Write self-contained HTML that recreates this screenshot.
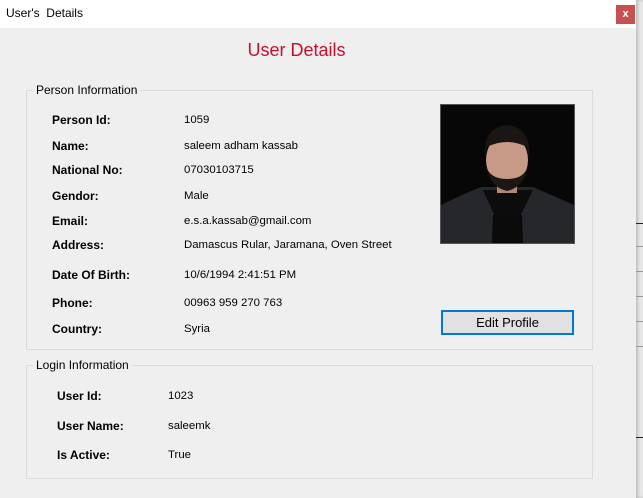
<!DOCTYPE html>
<html><head><style>
body{margin:0;width:643px;height:498px;position:relative;overflow:hidden;background:#f0f0f0;font-family:"Liberation Sans",sans-serif;font-size:12px;color:#000}
.side{position:absolute;left:636px;top:0;width:7px;height:498px;background:#e9e9e9;box-shadow:inset 2px 0 3px #bbb}
.ln{position:absolute;left:636px;width:7px;height:1px;background:#999}
.title{position:absolute;left:0;top:0;width:636px;height:28px;background:#fff}
.title span{position:absolute;left:6px;top:6px;font-size:12px}
.close{position:absolute;left:616px;top:5px;width:19px;height:19px;background:#c75050;color:#fff;font-weight:bold;font-size:11px;text-align:center;line-height:18px}
.dlg{position:absolute;left:0;top:28px;width:636px;height:470px;background:#efefef}
h1{position:absolute;left:0;width:593px;top:40px;margin:0;text-align:center;font-weight:normal;font-size:18px;color:#c8102e}
.gb{position:absolute;border:1px solid #dcdcdc}
.gb .lg{position:absolute;top:-8px;left:6px;background:#efefef;padding:0 3px;font-size:12px}
.t{position:absolute;white-space:nowrap;font-size:11.4px;margin-top:1px}
.b{font-weight:bold;font-size:12px;margin-top:0}
.photo{position:absolute;left:440px;top:104px;width:133px;height:138px;border:1px solid #555;background:#070707;overflow:hidden}
.btn{position:absolute;left:441px;top:310px;width:129px;height:21px;border:2px solid #0078d7;background:#e1e1e1;text-align:center;line-height:21px;font-size:13px}
</style></head><body>
<div class="side"></div>
<div class="ln" style="top:223px;background:#222"></div><div class="ln" style="top:246px"></div><div class="ln" style="top:271px"></div><div class="ln" style="top:296px"></div><div class="ln" style="top:321px"></div><div class="ln" style="top:346px"></div><div class="ln" style="top:437px;background:#222"></div>
<div class="title"><span>User's&nbsp; Details</span><div class="close">x</div></div>
<div class="dlg"></div>
<h1>User Details</h1>
<div class="gb" style="left:26px;top:90px;width:565px;height:258px"><div class="lg">Person Information</div></div>
<div class="gb" style="left:26px;top:365px;width:565px;height:112px"><div class="lg">Login Information</div></div>
<div class="t b" style="left:52px;top:113px">Person Id:</div><div class="t" style="left:184px;top:113px">1059</div>
<div class="t b" style="left:52px;top:139px">Name:</div><div class="t" style="left:184px;top:139px">saleem adham kassab</div>
<div class="t b" style="left:52px;top:163px">National No:</div><div class="t" style="left:184px;top:163px">07030103715</div>
<div class="t b" style="left:52px;top:189px">Gendor:</div><div class="t" style="left:184px;top:189px">Male</div>
<div class="t b" style="left:52px;top:214px">Email:</div><div class="t" style="left:184px;top:214px">e.s.a.kassab@gmail.com</div>
<div class="t b" style="left:52px;top:238px">Address:</div><div class="t" style="left:184px;top:238px">Damascus Rular, Jaramana, Oven Street</div>
<div class="t b" style="left:52px;top:268px">Date Of Birth:</div><div class="t" style="left:184px;top:268px">10/6/1994 2:41:51 PM</div>
<div class="t b" style="left:52px;top:296px">Phone:</div><div class="t" style="left:184px;top:296px">00963 959 270 763</div>
<div class="t b" style="left:52px;top:322px">Country:</div><div class="t" style="left:184px;top:322px">Syria</div>
<div class="t b" style="left:57px;top:389px">User Id:</div><div class="t" style="left:168px;top:389px">1023</div>
<div class="t b" style="left:57px;top:419px">User Name:</div><div class="t" style="left:168px;top:419px">saleemk</div>
<div class="t b" style="left:57px;top:448px">Is Active:</div><div class="t" style="left:168px;top:448px">True</div>
<div class="photo"><svg width="133" height="138" viewBox="0 0 133 138">
<path d="M0 100 Q20 90 40 82 L92 82 Q115 92 133 100 L133 138 L0 138Z" fill="#25272b"/>
<path d="M42 85 L66 138 L92 85Z" fill="#0c0c0c"/>
<path d="M52 110 L81 110 L82 138 L51 138Z" fill="#0a0a0a"/>
<rect x="56" y="70" width="20" height="18" fill="#b08878"/>
<ellipse cx="66" cy="55" rx="21" ry="26" fill="#c79a88"/>
<path d="M44 52 Q42 22 66 20 Q90 22 88 52 L86 42 Q66 32 46 42Z" fill="#1a1614"/>
<path d="M45 60 Q48 82 66 86 Q84 82 87 60 Q84 74 66 74 Q48 74 45 60Z" fill="#1c1714"/>
</svg></div>
<div class="btn">Edit Profile</div>
</body></html>
